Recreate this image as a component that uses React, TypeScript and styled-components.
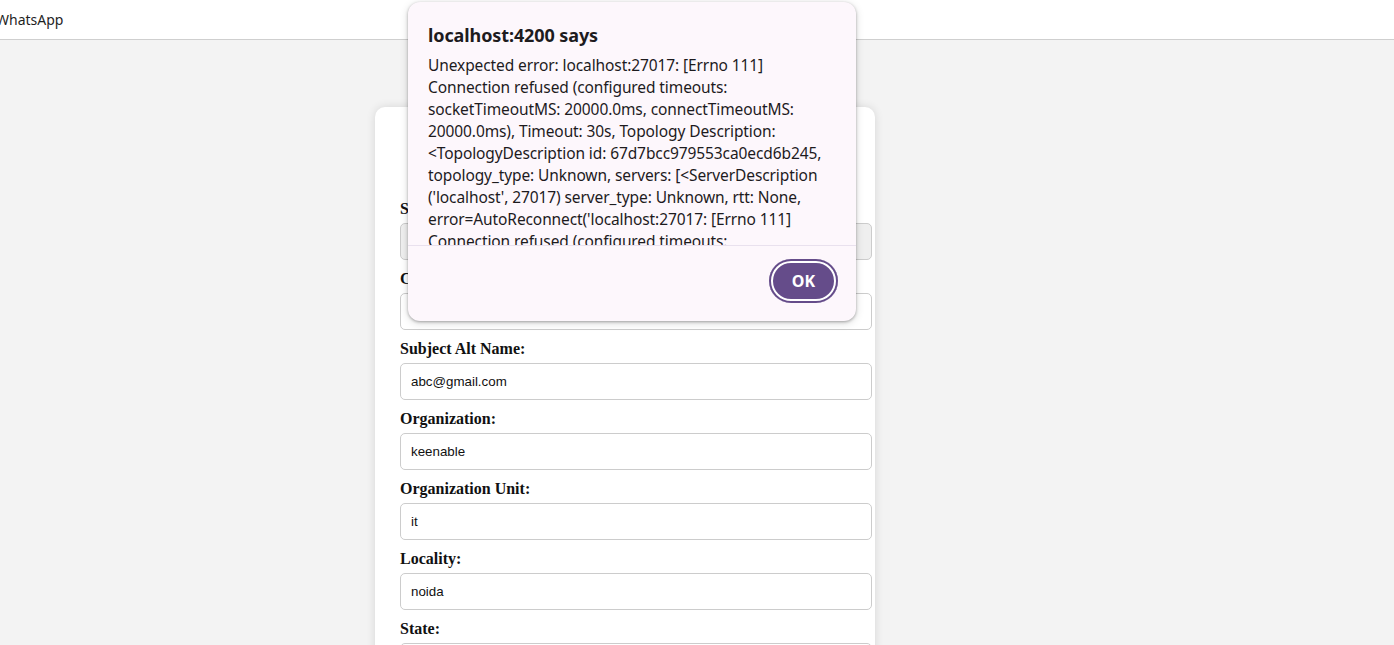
import React from "react";
import styled, { createGlobalStyle } from "styled-components";

const Global = createGlobalStyle`
  html, body { margin: 0; padding: 0; overflow: hidden; }
  body { background: #f3f3f3; font-family: "Liberation Serif", serif; }
`;

const Page = styled.div`
  min-height: 645px;
  position: relative;
`;

const NavBar = styled.header`
  height: 39px;
  background: #ffffff;
  border-bottom: 1px solid #cfcfcf;
  display: flex;
  align-items: center;
`;

const Brand = styled.span`
  margin-left: -4px;
  font-family: "Noto Sans", "Open Sans", sans-serif;
  font-size: 14px;
  color: #1f1f1f;
`;

const Main = styled.main`
  padding: 67px 0 0 375px;
`;

const Card = styled.section`
  width: 450px;
  padding: 25px;
  background: #ffffff;
  border-radius: 10px;
  box-shadow: 0 0 10px rgba(0, 0, 0, 0.12);
`;

const Title = styled.h2`
  margin: 18px 0 22px;
  font-size: 24px;
  line-height: 28px;
  text-align: center;
  color: #222;
`;

const Group = styled.div`
  margin-bottom: 10px;
`;

const Label = styled.label`
  display: block;
  margin-bottom: 5px;
  font-family: "Liberation Serif", serif;
  font-weight: bold;
  font-size: 16px;
  line-height: 18px;
  color: #111;
`;

const Input = styled.input<{ $muted?: boolean }>`
  display: block;
  width: 100%;
  height: 15px;
  padding: 10px;
  margin: 0;
  border: 1px solid #cccccc;
  border-radius: 5px;
  background: ${(p) => (p.$muted ? "#efefef" : "#ffffff")};
  font-family: "Liberation Sans", Arial, sans-serif;
  font-size: 13.33px;
  color: #111;
  outline: none;
`;

const Dialog = styled.div`
  position: absolute;
  left: 408px;
  top: 2px;
  width: 448px;
  height: 319px;
  background: #fdf7fc;
  border-radius: 12px;
  box-shadow: 0 1px 3px rgba(0, 0, 0, 0.3), 0 2px 8px rgba(0, 0, 0, 0.15);
  display: flex;
  flex-direction: column;
  font-family: "Noto Sans", "Open Sans", sans-serif;
  color: #1d1b1e;
  overflow: hidden;
`;

const DialogTitle = styled.div`
  padding: 19px 20px 0;
  font-size: 18px;
  line-height: 28px;
  font-weight: bold;
  letter-spacing: -0.1px;
`;

const DialogBody = styled.div`
  margin-top: 5px;
  padding: 0 20px;
  height: 191px;
  flex: none;
  overflow: hidden;
  font-size: 15.5px;
  line-height: 22px;
  letter-spacing: -0.1px;
`;

const Line = styled.div`
  white-space: nowrap;
`;

const DialogFooter = styled.div`
  flex: 1;
  border-top: 1px solid #e9e1ee;
  display: flex;
  align-items: flex-start;
  justify-content: flex-end;
  padding: 13px 18px 0 0;
`;

const OkButton = styled.button`
  width: 69px;
  height: 44px;
  border: none;
  border-radius: 22px;
  background: #654c8a;
  box-shadow: inset 0 0 0 2px #654c8a, inset 0 0 0 4px #ffffff;
  color: #ffffff;
  font-family: "Noto Sans", "Open Sans", sans-serif;
  font-weight: bold;
  font-size: 16px;
  cursor: pointer;
`;

const fields = [
  { label: "Select Type:", value: "", muted: true },
  { label: "Common Name:", value: "" },
  { label: "Subject Alt Name:", value: "abc@gmail.com" },
  { label: "Organization:", value: "keenable" },
  { label: "Organization Unit:", value: "it" },
  { label: "Locality:", value: "noida" },
  { label: "State:", value: "" },
  { label: "Country:", value: "" },
];

const lines = [
  "Unexpected error: localhost:27017: [Errno 111]",
  "Connection refused (configured timeouts:",
  "socketTimeoutMS: 20000.0ms, connectTimeoutMS:",
  "20000.0ms), Timeout: 30s, Topology Description:",
  "<TopologyDescription id: 67d7bcc979553ca0ecd6b245,",
  "topology_type: Unknown, servers: [<ServerDescription",
  "('localhost', 27017) server_type: Unknown, rtt: None,",
  "error=AutoReconnect('localhost:27017: [Errno 111]",
  "Connection refused (configured timeouts:",
  "socketTimeoutMS: 20000.0ms, connectTimeoutMS: 20000.0ms)')]>",
];

export default function App() {
  return (
    <Page>
      <Global />
      <NavBar>
        <Brand>WhatsApp</Brand>
      </NavBar>
      <Main>
        <Card>
          <Title>Generate CSR</Title>
          {fields.map((f) => (
            <Group key={f.label}>
              <Label>{f.label}</Label>
              <Input defaultValue={f.value} $muted={f.muted} readOnly />
            </Group>
          ))}
        </Card>
      </Main>
      <Dialog>
        <DialogTitle>localhost:4200 says</DialogTitle>
        <DialogBody>
          {lines.map((l, i) => (
            <Line key={i}>{l}</Line>
          ))}
        </DialogBody>
        <DialogFooter>
          <OkButton>OK</OkButton>
        </DialogFooter>
      </Dialog>
    </Page>
  );
}
